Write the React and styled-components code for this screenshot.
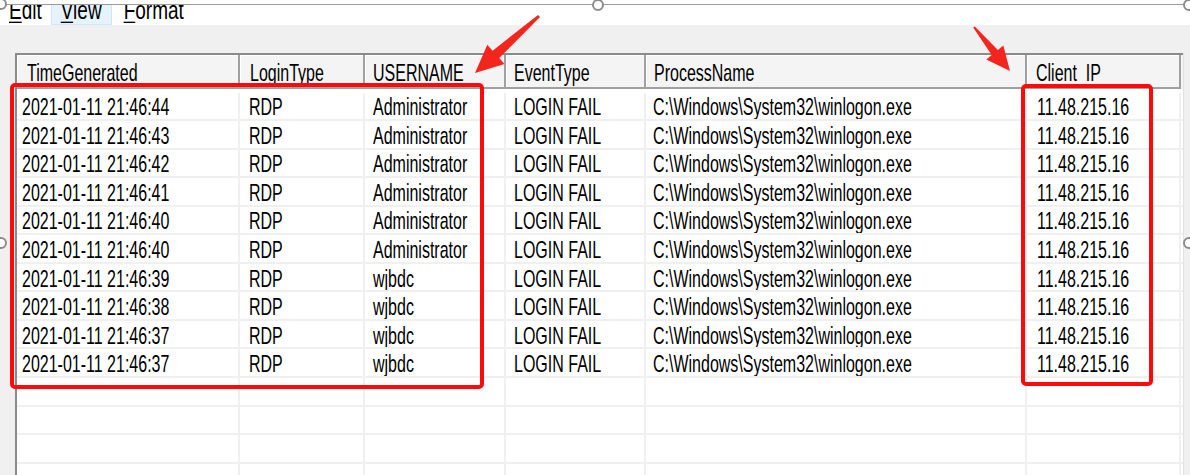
import React from 'react';
import styled, { createGlobalStyle } from 'styled-components';

const Global = createGlobalStyle`
  html, body { margin: 0; padding: 0; background: #fff; }
  body { font-family: "Liberation Sans", Arial, sans-serif; color: #000; }
`;

const Canvas = styled.div`
  position: relative;
  width: 1190px;
  height: 475px;
  overflow: hidden;
  background: #fff;
`;

const Shot = styled.div`
  margin-top: 5px;
  height: 470px;
  display: flex;
  flex-direction: column;
  background: #f0f0f0;
`;

const MenuBar = styled.div`
  height: 20px;
  flex: none;
  background: #fff;
  display: flex;
  overflow: hidden;
`;

const MenuItem = styled.div`
  height: 20px;
  box-sizing: border-box;
  padding: 0 ${p => p.$pad}px;
  background: ${p => (p.$active ? '#e5f3ff' : 'transparent')};
  border: 1px solid ${p => (p.$active ? '#cce8ff' : 'transparent')};
  border-top: none;
`;

const MenuLabel = styled.span`
  display: inline-block;
  font-size: 19px;
  line-height: 19px;
  margin-top: -5px;
  transform: scaleY(1.35);
  transform-origin: 50% 85%;
  u { text-decoration-thickness: 1px; text-underline-offset: 2px; }
`;

const Work = styled.div`
  flex: 1;
  display: flex;
  padding: 28px 7px 0 15px;
  min-height: 0;
`;

const ListView = styled.div`
  flex: 1;
  display: flex;
  flex-direction: column;
  border-left: 2px solid #8a8a8a;
  border-top: 2px solid #8a8a8a;
  background: #fff;
  box-shadow: 1px 0 0 #e2e2e2;
`;

const COLS = '223px 125px 141px 140px 381px 154px';

const HeaderRow = styled.div`
  display: grid;
  grid-template-columns: ${COLS};
  height: 34px;
  flex: none;
  background: #f4f4f4;
`;

const HeaderCell = styled.div`
  display: flex;
  align-items: center;
  box-sizing: border-box;
  padding-left: ${p => p.$pad}px;
  padding-top: 4px;
  border-right: 2px solid #a0a0a0;
  border-bottom: 2px solid #a0a0a0;
  box-shadow: inset 1px 1px 0 #fff;
  white-space: pre;
`;

const Text = styled.span`
  display: inline-block;
  font-size: 16px;
  line-height: 16px;
  transform: scaleY(1.55);
  white-space: pre;
`;

const Body = styled.div`
  flex: 1;
  padding-top: 3.5px;
  overflow: hidden;
`;

const Row = styled.div`
  display: grid;
  grid-template-columns: ${COLS};
  height: 28.56px;
  box-sizing: border-box;
  border-bottom: 2px solid #f0f0f0;
`;

const Cell = styled.div`
  display: flex;
  align-items: center;
  box-sizing: border-box;
  padding-left: ${p => p.$pad}px;
  padding-top: 3px;
  border-right: 2px solid #f0f0f0;
  overflow: hidden;
`;

const RedBox = styled.div`
  position: absolute;
  left: ${p => p.$x}px;
  top: ${p => p.$y}px;
  width: ${p => p.$w}px;
  height: ${p => p.$h}px;
  box-sizing: border-box;
  border: 4px solid #fe0a0a;
  border-radius: 5px;
  pointer-events: none;
`;

const Overlay = styled.svg`
  position: absolute;
  left: 0;
  top: 0;
  pointer-events: none;
`;

const headers = [
  ['TimeGenerated', 10],
  ['LoginType', 10],
  ['USERNAME', 8],
  ['EventType', 8],
  ['ProcessName', 8],
  ['Client  IP', 9],
];
const pads = [5, 9, 8, 8, 7, 10];

const times = ['44', '43', '42', '41', '40', '40', '39', '38', '37', '37'];
const users = ['Administrator', 'Administrator', 'Administrator', 'Administrator', 'Administrator', 'Administrator', 'wjbdc', 'wjbdc', 'wjbdc', 'wjbdc'];

const rows = times.map((t, i) => [
  `2021-01-11 21:46:${t}`,
  'RDP',
  users[i],
  'LOGIN FAIL',
  'C:\\Windows\\System32\\winlogon.exe',
  '11.48.215.16',
]);
const emptyRows = 4;

function pts(a) {
  return a.map(p => p.join(',')).join(' ');
}

export default function App() {
  return (
    <Canvas>
      <Global />
      <Shot>
        <MenuBar>
          <MenuItem $pad={8}><MenuLabel><u>E</u>dit</MenuLabel></MenuItem>
          <MenuItem $pad={9} $active><MenuLabel><u>V</u>iew</MenuLabel></MenuItem>
          <MenuItem $pad={11}><MenuLabel><u>F</u>ormat</MenuLabel></MenuItem>
        </MenuBar>
        <Work>
          <ListView>
            <HeaderRow>
              {headers.map(([h, p]) => (
                <HeaderCell key={h} $pad={p}><Text>{h}</Text></HeaderCell>
              ))}
            </HeaderRow>
            <Body>
              {rows.map((r, i) => (
                <Row key={i}>
                  {r.map((c, j) => (
                    <Cell key={j} $pad={pads[j]}><Text>{c}</Text></Cell>
                  ))}
                </Row>
              ))}
              {Array.from({ length: emptyRows }).map((_, i) => (
                <Row key={'e' + i}>
                  {pads.map((p, j) => <Cell key={j} $pad={p} />)}
                </Row>
              ))}
            </Body>
          </ListView>
        </Work>
      </Shot>

      <RedBox $x={10} $y={83} $w={474} $h={306} />
      <RedBox $x={1021} $y={84} $w={132} $h={302} />

      <Overlay width="1190" height="475" viewBox="0 0 1190 475">
        <line x1="0" y1="4.5" x2="1190" y2="4.5" stroke="#9a9a9a" strokeWidth="1" />
        <polygon
          fill="#f4251c"
          points={pts([[538, 14.9], [492.6, 50.7], [487.3, 44.7], [475, 73], [504.5, 64.1], [499.2, 58.1], [540, 17.1]])}
        />
        <polygon
          fill="#f4251c"
          points={pts([[974.8, 26.4], [997.9, 49.9], [1003.3, 45.4], [1010, 71], [986.3, 59.4], [991.7, 54.9], [973.2, 27.6]])}
        />
        {[[1, 4], [598, 5], [1189, 5], [1, 243], [1189, 243]].map(([cx, cy], i) => (
          <circle key={i} cx={cx} cy={cy} r="5" fill="#fff" stroke="#8c8c8c" strokeWidth="2" />
        ))}
      </Overlay>
    </Canvas>
  );
}
